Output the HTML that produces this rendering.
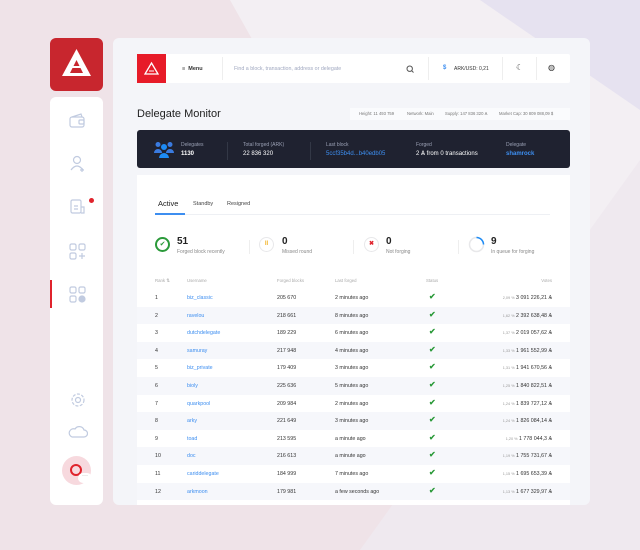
<!DOCTYPE html>
<html><head><meta charset="utf-8"><style>
*{margin:0;padding:0;box-sizing:border-box}
body{width:640px;height:550px;overflow:hidden;position:relative;font-family:"Liberation Sans",sans-serif;background:#efe3e8}
.a{position:absolute}
.t{font-size:5px;color:#999}
.lk{color:#3d8ef0}
.row{position:absolute;left:137px;width:433px;height:17.6px;font-size:5.3px;color:#333}
.row.s{background:#f6f7fb}
.row span{position:absolute;top:6px}
.ck{color:#2b9a3a;font-size:8px;top:3px!important;font-weight:bold}
</style></head><body>
<svg class="a" style="left:0;top:0" width="640" height="550">
<polygon points="230,0 640,0 640,550 540,550" fill="#f3eff3"/>
<polygon points="480,0 640,0 640,110" fill="#e6e2f0"/>
<polygon points="640,160 640,550 360,550" fill="#efe9ef"/>
</svg>
<!-- logo -->
<div class="a" style="left:50px;top:38px;width:53px;height:53px;background:#c8262e;border-radius:6px"></div>
<svg class="a" style="left:58px;top:46px" width="37" height="37" viewBox="0 0 37 37"><polygon points="18.5,3 33,30 4,30" fill="#fff"/><polygon points="18.5,14 25,27 12,27" fill="#c8262e"/><rect x="12" y="20" width="13" height="2" fill="#fff"/></svg>
<!-- sidebar -->
<div class="a" style="left:50px;top:97px;width:53px;height:408px;background:#fff;border-radius:6px"></div>
<div class="a" style="left:50px;top:280px;width:2px;height:28px;background:#e0232c"></div>
<svg class="a" style="left:68px;top:112px" width="20" height="300" fill="none" stroke="#c1cbe0" stroke-width="1.2">
<rect x="2" y="5" width="14" height="10" rx="2"/><path d="M4 5 L13 2 L14 5"/><rect x="11" y="8" width="5" height="4" rx="1"/>
<circle cx="9" cy="48" r="3.5"/><path d="M3 58 Q9 50 15 58"/><path d="M14 56 v4 M12 58 h4"/>
<rect x="3" y="88" width="10" height="13" rx="1.5"/><path d="M6 94 h4 M6 97 h4 M13 95 h3 v6 h-3"/>
<rect x="2" y="132" width="6" height="6" rx="1.5"/><rect x="11" y="132" width="6" height="6" rx="1.5"/><rect x="2" y="141" width="6" height="6" rx="1.5"/><path d="M14 141 v6 M11 144 h6"/>
<rect x="2" y="175" width="6" height="6" rx="1.5"/><rect x="11" y="175" width="6" height="6" rx="1.5"/><rect x="2" y="184" width="6" height="6" rx="1.5"/><circle cx="14" cy="187" r="3" fill="#c1cbe0"/>
<circle cx="10" cy="288" r="2.5"/><circle cx="10" cy="288" r="6" stroke-dasharray="3 1.5"/>
</svg>
<svg class="a" style="left:68px;top:424px" width="20" height="16" fill="none" stroke="#c1cbe0" stroke-width="1.2"><path d="M4 13 h12 a3.5 3.5 0 0 0 0-7 a5 5 0 0 0-9-1 a4 4 0 0 0-3 8z"/></svg>
<div class="a" style="left:89px;top:198px;width:5px;height:5px;border-radius:50%;background:#e0232c"></div>
<div class="a" style="left:62px;top:456px;width:29px;height:29px;border-radius:50%;background:#f7d9de"></div>
<div class="a" style="left:70px;top:464px;width:12px;height:12px;border-radius:50%;border:2.5px solid #e0232c"></div>
<div class="a" style="left:78px;top:473px;width:14px;height:10px;border-radius:5px;background:#fff;font-size:6px;color:#999;text-align:center;line-height:6px">···</div>
<!-- main -->
<div class="a" style="left:113px;top:38px;width:477px;height:467px;background:#f4f5f9;border-radius:6px"></div>
<div class="a" style="left:137px;top:54px;width:433px;height:29px;background:#fff;border-radius:2px"></div>
<div class="a" style="left:137px;top:54px;width:29px;height:29px;background:#e71b28"></div>
<svg class="a" style="left:144px;top:61px" width="15" height="15"><polygon points="7.5,2 14,13 1,13" fill="none" stroke="#fff" stroke-width="1.3"/><path d="M5 10 h5" stroke="#fff" stroke-width="1"/></svg>
<div class="a" style="left:182px;top:66px;font-size:5.5px;color:#333;font-weight:bold">≡&nbsp; Menu</div>
<div class="a" style="left:222px;top:57px;width:1px;height:23px;background:#eee"></div>
<div class="a t" style="left:234px;top:66px;color:#a0a8c0;font-size:5.3px">Find a block, transaction, address or delegate</div>
<svg class="a" style="left:406px;top:65px" width="8" height="8" fill="none" stroke="#555" stroke-width="1"><circle cx="3.7" cy="3.7" r="2.7"/><path d="M5.8 5.8 L7.5 7.5"/></svg>
<div class="a" style="left:428px;top:57px;width:1px;height:23px;background:#eee"></div>
<div class="a" style="left:443px;top:65px;font-size:6px;color:#3d8ef0;font-weight:bold">$</div>
<div class="a" style="left:454px;top:66px;font-size:5px;color:#333">ARK/USD: 0,21</div>
<div class="a" style="left:502px;top:57px;width:1px;height:23px;background:#eee"></div>
<div class="a" style="left:516px;top:63px;font-size:8px;color:#333">☾</div>
<div class="a" style="left:536px;top:57px;width:1px;height:23px;background:#eee"></div>
<div class="a" style="left:548px;top:63px;font-size:8px;color:#333">◍</div>
<div class="a" style="left:137px;top:108px;font-size:11px;color:#222">Delegate Monitor</div>
<div class="a" style="left:350px;top:108px;width:220px;height:12px;background:#fafbfd;font-size:4.2px;color:#777;line-height:12px">
<span style="position:absolute;left:9px">Height: 11 493 759</span><span style="position:absolute;left:57px">Network: Main</span><span style="position:absolute;left:95px">Supply: 147 836 320 Ѧ</span><span style="position:absolute;left:149px">Market Cap: 30 809 088,09 $</span></div>
<div class="a" style="left:137px;top:130px;width:433px;height:38px;background:#1f2230;border-radius:3px"></div>
<svg class="a" style="left:154px;top:141px" width="20" height="17" fill="#3a7be0"><circle cx="4" cy="3.5" r="2.5"/><circle cx="16" cy="3.5" r="2.5"/><circle cx="10" cy="6" r="3" fill="#1d8bf5"/><path d="M0 12 a4 4 0 0 1 8 0z M12 12 a4 4 0 0 1 8 0z"/><path d="M5 17 a5 5 0 0 1 10 0z" fill="#1d8bf5"/></svg>
<div class="a" style="left:181px;top:142px;font-size:5px;color:#9aa0b4">Delegates</div><div class="a" style="left:181px;top:151px;font-size:6px;color:#fff;font-weight:bold">1130</div>
<div class="a" style="left:227px;top:142px;width:1px;height:18px;background:#333846"></div>
<div class="a" style="left:243px;top:142px;font-size:5px;color:#9aa0b4">Total forged (ARK)</div><div class="a" style="left:243px;top:151px;font-size:6px;color:#fff">22 836 320</div>
<div class="a" style="left:310px;top:142px;width:1px;height:18px;background:#333846"></div>
<div class="a" style="left:326px;top:142px;font-size:5px;color:#9aa0b4">Last block</div><div class="a lk" style="left:326px;top:151px;font-size:6px">5ccf35b4d...b40edb05</div>
<div class="a" style="left:416px;top:142px;font-size:5px;color:#9aa0b4">Forged</div><div class="a" style="left:416px;top:151px;font-size:6px;color:#fff">2 Ѧ from 0 transactions</div>
<div class="a" style="left:506px;top:142px;font-size:5px;color:#9aa0b4">Delegate</div><div class="a lk" style="left:506px;top:151px;font-size:6px;font-weight:bold">shamrock</div>
<div class="a" style="left:137px;top:175px;width:433px;height:330px;background:#fff"></div>
<div class="a" style="left:158px;top:199px;font-size:7.5px;color:#222">Active</div>
<div class="a" style="left:193px;top:201px;font-size:5.5px;color:#444">Standby</div>
<div class="a" style="left:227px;top:201px;font-size:5.5px;color:#444">Resigned</div>
<div class="a" style="left:155px;top:214px;width:395px;height:1px;background:#eef0f4"></div>
<div class="a" style="left:155px;top:213px;width:30px;height:2px;background:#3d8ef0"></div>
<!-- stats -->
<div class="a" style="left:155px;top:237px;width:15px;height:15px;border-radius:50%;border:2px solid #2b9a3a;color:#2b9a3a;font-size:7px;text-align:center;line-height:11px">✔</div>
<div class="a" style="left:177px;top:236px;font-size:10px;color:#222;font-weight:bold">51</div><div class="a" style="left:177px;top:249px;font-size:5px;color:#888">Forged block recently</div>
<div class="a" style="left:249px;top:240px;width:1px;height:14px;background:#eee"></div>
<div class="a" style="left:259px;top:237px;width:15px;height:15px;border-radius:50%;border:1.5px solid #e8e8ea;color:#f2b630;font-size:6px;text-align:center;line-height:12px;font-weight:bold">II</div>
<div class="a" style="left:282px;top:236px;font-size:10px;color:#222;font-weight:bold">0</div><div class="a" style="left:282px;top:249px;font-size:5px;color:#888">Missed round</div>
<div class="a" style="left:353px;top:240px;width:1px;height:14px;background:#eee"></div>
<div class="a" style="left:364px;top:237px;width:15px;height:15px;border-radius:50%;border:1.5px solid #e8e8ea;color:#e0232c;font-size:6px;text-align:center;line-height:12px;font-weight:bold">✖</div>
<div class="a" style="left:386px;top:236px;font-size:10px;color:#222;font-weight:bold">0</div><div class="a" style="left:386px;top:249px;font-size:5px;color:#888">Not forging</div>
<div class="a" style="left:458px;top:240px;width:1px;height:14px;background:#eee"></div>
<svg class="a" style="left:468px;top:236px" width="17" height="17"><circle cx="8.5" cy="8.5" r="7" fill="none" stroke="#e8e8ea" stroke-width="1.5"/><path d="M8.5 1.5 A7 7 0 0 1 15.5 8.5" fill="none" stroke="#1d8bf5" stroke-width="1.5"/></svg>
<div class="a" style="left:491px;top:236px;font-size:10px;color:#222;font-weight:bold">9</div><div class="a" style="left:491px;top:249px;font-size:5px;color:#888">In queue for forging</div>
<!-- table head -->
<div class="a" style="left:155px;top:278px;font-size:4.3px;color:#aaa">Rank ⇅</div>
<div class="a" style="left:187px;top:278px;font-size:4.3px;color:#aaa">Username</div>
<div class="a" style="left:277px;top:278px;font-size:4.3px;color:#aaa">Forged blocks</div>
<div class="a" style="left:335px;top:278px;font-size:4.3px;color:#aaa">Last forged</div>
<div class="a" style="left:426px;top:278px;font-size:4.3px;color:#aaa">Status</div>
<div class="a" style="left:532px;top:278px;font-size:4.3px;color:#aaa;width:20px;text-align:right">Votes</div>
<div class="row" style="top:289px"><span style="left:18px">1</span><span class="lk" style="left:50px">biz_classic</span><span style="left:140px">205 670</span><span style="left:198px">2 minutes ago</span><span class="ck" style="left:292px">✔</span><span style="right:18px"><small style="font-size:3.8px;color:#999">2,09 %</small> 3 091 226,21 Ѧ</span></div>
<div class="row s" style="top:306.6px"><span style="left:18px">2</span><span class="lk" style="left:50px">ravelou</span><span style="left:140px">218 661</span><span style="left:198px">8 minutes ago</span><span class="ck" style="left:292px">✔</span><span style="right:18px"><small style="font-size:3.8px;color:#999">1,62 %</small> 2 392 638,48 Ѧ</span></div>
<div class="row" style="top:324.2px"><span style="left:18px">3</span><span class="lk" style="left:50px">dutchdelegate</span><span style="left:140px">189 229</span><span style="left:198px">6 minutes ago</span><span class="ck" style="left:292px">✔</span><span style="right:18px"><small style="font-size:3.8px;color:#999">1,37 %</small> 2 019 057,62 Ѧ</span></div>
<div class="row s" style="top:341.8px"><span style="left:18px">4</span><span class="lk" style="left:50px">samuray</span><span style="left:140px">217 948</span><span style="left:198px">4 minutes ago</span><span class="ck" style="left:292px">✔</span><span style="right:18px"><small style="font-size:3.8px;color:#999">1,33 %</small> 1 961 552,99 Ѧ</span></div>
<div class="row" style="top:359.4px"><span style="left:18px">5</span><span class="lk" style="left:50px">biz_private</span><span style="left:140px">179 409</span><span style="left:198px">3 minutes ago</span><span class="ck" style="left:292px">✔</span><span style="right:18px"><small style="font-size:3.8px;color:#999">1,31 %</small> 1 941 670,56 Ѧ</span></div>
<div class="row s" style="top:377px"><span style="left:18px">6</span><span class="lk" style="left:50px">bioly</span><span style="left:140px">225 636</span><span style="left:198px">5 minutes ago</span><span class="ck" style="left:292px">✔</span><span style="right:18px"><small style="font-size:3.8px;color:#999">1,25 %</small> 1 840 822,51 Ѧ</span></div>
<div class="row" style="top:394.6px"><span style="left:18px">7</span><span class="lk" style="left:50px">quarkpool</span><span style="left:140px">209 984</span><span style="left:198px">2 minutes ago</span><span class="ck" style="left:292px">✔</span><span style="right:18px"><small style="font-size:3.8px;color:#999">1,24 %</small> 1 839 727,12 Ѧ</span></div>
<div class="row s" style="top:412.2px"><span style="left:18px">8</span><span class="lk" style="left:50px">arky</span><span style="left:140px">221 649</span><span style="left:198px">3 minutes ago</span><span class="ck" style="left:292px">✔</span><span style="right:18px"><small style="font-size:3.8px;color:#999">1,24 %</small> 1 826 084,14 Ѧ</span></div>
<div class="row" style="top:429.8px"><span style="left:18px">9</span><span class="lk" style="left:50px">toad</span><span style="left:140px">213 595</span><span style="left:198px">a minute ago</span><span class="ck" style="left:292px">✔</span><span style="right:18px"><small style="font-size:3.8px;color:#999">1,20 %</small> 1 778 044,3 Ѧ</span></div>
<div class="row s" style="top:447.4px"><span style="left:18px">10</span><span class="lk" style="left:50px">doc</span><span style="left:140px">216 613</span><span style="left:198px">a minute ago</span><span class="ck" style="left:292px">✔</span><span style="right:18px"><small style="font-size:3.8px;color:#999">1,19 %</small> 1 755 731,67 Ѧ</span></div>
<div class="row" style="top:465px"><span style="left:18px">11</span><span class="lk" style="left:50px">cariddelegate</span><span style="left:140px">184 999</span><span style="left:198px">7 minutes ago</span><span class="ck" style="left:292px">✔</span><span style="right:18px"><small style="font-size:3.8px;color:#999">1,15 %</small> 1 695 653,39 Ѧ</span></div>
<div class="row s" style="top:482.6px"><span style="left:18px">12</span><span class="lk" style="left:50px">arkmoon</span><span style="left:140px">179 981</span><span style="left:198px">a few seconds ago</span><span class="ck" style="left:292px">✔</span><span style="right:18px"><small style="font-size:3.8px;color:#999">1,13 %</small> 1 677 329,97 Ѧ</span></div>
</body></html>
